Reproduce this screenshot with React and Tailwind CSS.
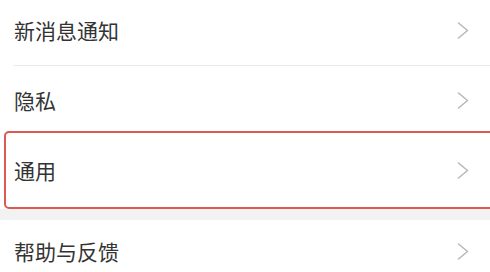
import React from "react";

const Chevron = () => (
  <svg width="12" height="17" viewBox="0 0 12 17" fill="none" className="shrink-0">
    <polyline points="1.5,1 10.5,8.5 1.5,16" stroke="#b9b9b9" strokeWidth="1.6" strokeLinecap="round" strokeLinejoin="round" />
  </svg>
);

const Row = ({ label, className = "" }) => (
  <div className={"flex items-center justify-between " + className}>
    <span className="text-[21px] text-[#333333] leading-none">{label}</span>
    <Chevron />
  </div>
);

export default function App() {
  return (
    <div
      className="w-[490px] h-[272px] overflow-hidden bg-white"
      style={{ fontFamily: '"Noto Sans CJK SC", "Noto Sans", sans-serif' }}
    >
      <Row label="新消息通知" className="h-[65px] pl-[14px] pr-[21px] pb-[5px]" />
      <div className="ml-[14px] h-px bg-[#e9e9e9]" />
      <Row label="隐私" className="h-[65px] pl-[14px] pr-[21px] pt-[3px]" />
      <Row
        label="通用"
        className="h-[78px] ml-[4px] mr-[-10px] pl-[8px] pr-[29px] border-2 border-[#dc5850] rounded-[5px]"
      />
      <div className="h-[11px] bg-[#f2f2f2]" />
      <Row label="帮助与反馈" className="h-[65px] pl-[14px] pr-[21px] pb-[3px]" />
    </div>
  );
}
